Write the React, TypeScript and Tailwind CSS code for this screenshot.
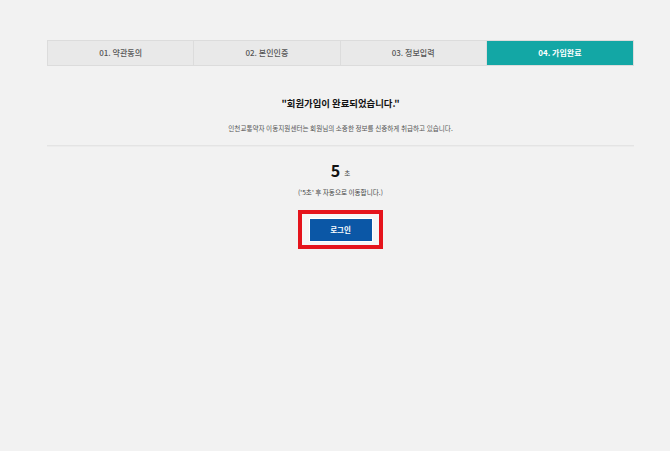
import React from "react";

const tabs = ["01. 약관동의", "02. 본인인증", "03. 정보입력", "04. 가입완료"];

export default function App() {
  return (
    <div
      className="w-[670px] h-[451px] bg-[#f2f2f2] overflow-hidden pt-[40px]"
      style={{ fontFamily: '"Noto Sans CJK KR", "Noto Sans", sans-serif' }}
    >
      <div className="ml-[47px] w-[587px]">
        <div className="grid grid-cols-4 h-[26px] border border-[#dcdcdc]">
          {tabs.map((t, i) => (
            <div
              key={t}
              className={
                i === 3
                  ? "flex items-center justify-center bg-[#13a7a5] text-white text-[8px] font-bold"
                  : "flex items-center justify-center bg-[#e9e9e9] border-r border-[#dcdcdc] text-[#555] text-[8px] font-medium"
              }
            >
              {t}
            </div>
          ))}
        </div>
        <div className="mt-[30px] text-center text-[9.4px] font-bold text-[#111] leading-[14px]">
          "회원가입이 완료되었습니다."
        </div>
        <div className="mt-[13px] text-center text-[6.6px] text-[#555] leading-[10px]">
          인천교통약자 이동지원센터는 회원님의 소중한 정보를 신중하게 취급하고 있습니다.
        </div>
        <div className="mt-[12px] h-[2px] border-t border-[#e4e4e4] border-b border-b-[#ececec]" />
        <div className="mt-[15px] flex items-end justify-center gap-[4px] leading-none text-[#111]">
          <span className="text-[16px] font-bold">5</span>
          <span className="text-[6.5px] mb-[2px] text-[#444]">초</span>
        </div>
        <div className="mt-[9px] text-center text-[6.6px] text-[#444] leading-[10px]">
          ('5초' 후 자동으로 이동합니다.)
        </div>
        <div className="mt-[13px] flex justify-center">
          <div className="w-[85px] h-[39px] border-[4px] border-[#e5141c] flex items-center justify-center bg-[#f6f6f6]">
            <button className="w-[64px] h-[24px] bg-[#0b57a6] text-white text-[7.5px] font-bold border border-white">
              로그인
            </button>
          </div>
        </div>
      </div>
    </div>
  );
}
